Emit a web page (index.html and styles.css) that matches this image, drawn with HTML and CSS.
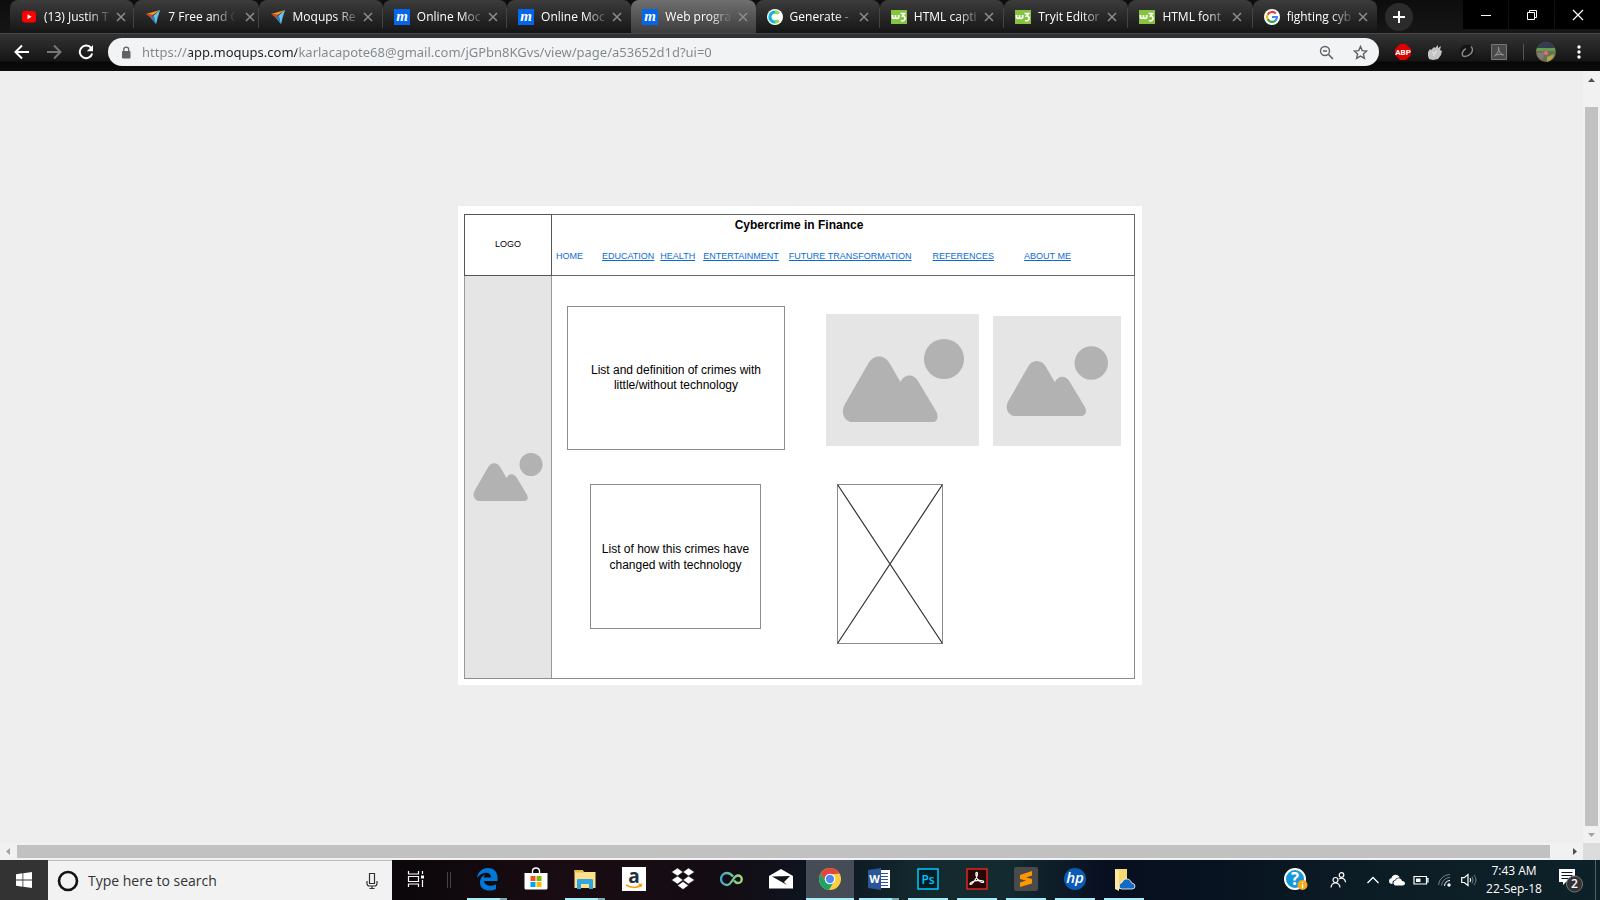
FILE: index.html
```html
<!DOCTYPE html>
<html lang="en">
<head>
<meta charset="utf-8">
<title>Web programming wireframe</title>
<link rel="stylesheet" href="styles.css">
</head>
<body>
<svg class="defs" aria-hidden="true">
  <symbol id="close" viewBox="0 0 10 10"><path d="M1 1l8 8M9 1l-8 8" stroke="#8d8d8d" stroke-width="1.500" fill="none"/></symbol>
  <symbol id="youtube" viewBox="0 0 16 16"><rect x="1" y="2" width="14" height="11.500" rx="3" fill="#f00"/><path d="M6.500 5.200v5l4.200-2.500z" fill="#fff"/></symbol>
  <symbol id="plane" viewBox="0 0 16 16"><path d="M1 5L15 1 8 6z" fill="#f7941d"/><path d="M1 5l7 1-2 3z" fill="#d9482b"/><path d="M15 1l-4 14-2-8z" fill="#3fa9dc"/><path d="M15 1L6 9l5 6 1-7z" fill="#6cc5ea"/><path d="M9 7l2 8-5-6z" fill="#2a7db0"/></symbol>
  <symbol id="generate" viewBox="0 0 16 16"><circle cx="8" cy="8" r="8" fill="#fff"/><path d="M11.500 4.500A5 5 0 1 0 11.500 11.500" fill="none" stroke="#12b5d8" stroke-width="3.200"/><path d="M8 3A5 5 0 0 1 11.500 4.500M11.500 11.500A5 5 0 0 1 8 13" fill="none" stroke="#a4d93a" stroke-width="3.200"/></symbol>
  <symbol id="w3" viewBox="0 0 16 16"><rect y="1" width="16" height="14" fill="#85c440"/><path d="M1.500 6v2.500q1.500 2 3 0V6M4.500 8.500q1.700 2 3.200 0V6M9.500 4.500h4L11.500 7q3 .2 2.500 3-1 2.500-4 1.500" fill="none" stroke="#fff" stroke-width="1.700"/></symbol>
  <symbol id="google" viewBox="0 0 16 16"><circle cx="8" cy="8" r="8" fill="#fff"/><g fill="none" stroke-width="2.200"><path d="M11.800 4.600A5 5 0 0 0 3.600 5.700" stroke="#ea4335"/><path d="M3.600 5.700a5 5 0 0 0 0 4.600" stroke="#fbbc05"/><path d="M3.600 10.300A5 5 0 0 0 11.400 11.600" stroke="#34a853"/><path d="M11.400 11.600A5 5 0 0 0 13 8H8" stroke="#4285f4"/></g></symbol>
  <symbol id="mountains" viewBox="0 0 96 83"><path d="M26 8C31-2 43-2 48 8L58.500 26C62 18 71 17 76 25L94 55C98 63 94 67 87 67H14C2 67-2 57 3 48Z" fill="#b2b2b2"/></symbol>
</svg>

<header class="browser">
  <div class="tabstrip">
    <nav class="tabs" aria-label="Tabs">
      <div class="tab"><svg class="fav"><use href="#youtube"/></svg><span class="tab-title">(13) Justin T</span><button class="tab-close" aria-label="Close tab"><svg><use href="#close"/></svg></button></div>
      <div class="tab"><svg class="fav"><use href="#plane"/></svg><span class="tab-title">7 Free and C</span><button class="tab-close" aria-label="Close tab"><svg><use href="#close"/></svg></button></div>
      <div class="tab"><svg class="fav"><use href="#plane"/></svg><span class="tab-title">Moqups Re</span><button class="tab-close" aria-label="Close tab"><svg><use href="#close"/></svg></button></div>
      <div class="tab"><svg class="fav" viewBox="0 0 16 16"><rect width="16" height="16" fill="#0566ea"/><text x="8" y="12" text-anchor="middle" class="moqups-m">m</text></svg><span class="tab-title">Online Moc</span><button class="tab-close" aria-label="Close tab"><svg><use href="#close"/></svg></button></div>
      <div class="tab before-active"><svg class="fav" viewBox="0 0 16 16"><rect width="16" height="16" fill="#0566ea"/><text x="8" y="12" text-anchor="middle" class="moqups-m">m</text></svg><span class="tab-title">Online Moc</span><button class="tab-close" aria-label="Close tab"><svg><use href="#close"/></svg></button></div>
      <div class="tab active"><svg class="fav" viewBox="0 0 16 16"><rect width="16" height="16" fill="#0566ea"/><text x="8" y="12" text-anchor="middle" class="moqups-m">m</text></svg><span class="tab-title">Web progra</span><button class="tab-close" aria-label="Close tab"><svg><use href="#close"/></svg></button></div>
      <div class="tab"><svg class="fav"><use href="#generate"/></svg><span class="tab-title">Generate -</span><button class="tab-close" aria-label="Close tab"><svg><use href="#close"/></svg></button></div>
      <div class="tab"><svg class="fav"><use href="#w3"/></svg><span class="tab-title">HTML capti</span><button class="tab-close" aria-label="Close tab"><svg><use href="#close"/></svg></button></div>
      <div class="tab"><svg class="fav"><use href="#w3"/></svg><span class="tab-title">Tryit Editor</span><button class="tab-close" aria-label="Close tab"><svg><use href="#close"/></svg></button></div>
      <div class="tab"><svg class="fav"><use href="#w3"/></svg><span class="tab-title">HTML font</span><button class="tab-close" aria-label="Close tab"><svg><use href="#close"/></svg></button></div>
      <div class="tab"><svg class="fav"><use href="#google"/></svg><span class="tab-title">fighting cyb</span><button class="tab-close" aria-label="Close tab"><svg><use href="#close"/></svg></button></div>
    </nav>
    <button class="new-tab" aria-label="New tab"><svg viewBox="0 0 12 12"><path d="M6 0v12M0 6h12" stroke="#fff" stroke-width="2"/></svg></button>
    <div class="window-controls">
      <button aria-label="Minimize"><svg viewBox="0 0 12 12"><path d="M1 6.500h10" stroke="#fff"/></svg></button>
      <button aria-label="Restore"><svg viewBox="0 0 12 12"><path d="M1.500 3.500h7v7h-7zM3.500 3.500v-2h7v7h-2" fill="none" stroke="#fff"/></svg></button>
      <button aria-label="Close"><svg viewBox="0 0 12 12"><path d="M1 1l10 10M11 1L1 11" stroke="#fff" stroke-width="1.200"/></svg></button>
    </div>
  </div>
  <div class="toolbar">
    <div class="nav-buttons">
      <button aria-label="Back"><svg viewBox="0 0 16 16"><path d="M15 8H2M8 1.500L1.500 8 8 14.500" fill="none" stroke="#fff" stroke-width="2"/></svg></button>
      <button aria-label="Forward"><svg viewBox="0 0 16 16"><path d="M1 8h13M8 1.500L14.500 8 8 14.500" fill="none" stroke="#777" stroke-width="2"/></svg></button>
      <button aria-label="Reload"><svg viewBox="0 0 16 16"><path d="M13.200 4.200A6.300 6.300 0 1 0 14.200 9.500" fill="none" stroke="#fff" stroke-width="2"/><path d="M15 1v6.200H8.800z" fill="#fff"/></svg></button>
    </div>
    <div class="omnibox">
      <svg class="lock" viewBox="0 0 10 13"><rect x="1" y="5" width="8.500" height="7.500" rx="1" fill="#5f6368"/><path d="M2.800 5V3.500a2.400 2.400 0 0 1 4.900 0V5" fill="none" stroke="#5f6368" stroke-width="1.300"/></svg>
      <input class="url" type="text" aria-label="Address" value="https://app.moqups.com/karlacapote68@gmail.com/jGPbn8KGvs/view/page/a53652d1d?ui=0">
      <button aria-label="Zoom"><svg viewBox="0 0 15 15"><circle cx="6" cy="6" r="4.500" fill="none" stroke="#5f6368" stroke-width="1.400"/><path d="M4 6h4M9.500 9.500l4.500 4.500" stroke="#5f6368" stroke-width="1.600"/></svg></button>
      <button aria-label="Bookmark"><svg viewBox="0 0 15 15"><path d="M7.500 1.500l1.800 4.100 4.500.4-3.400 3 1 4.400-3.900-2.300-3.900 2.300 1-4.400-3.400-3 4.500-.4z" fill="none" stroke="#5f6368" stroke-width="1.400"/></svg></button>
    </div>
    <div class="extensions">
      <button aria-label="Adblock Plus"><svg viewBox="0 0 16 16"><path d="M5 0h6l5 5v6l-5 5H5l-5-5V5z" fill="#d00"/><text x="8" y="11" text-anchor="middle" font-family="Roboto, sans-serif" font-size="8" font-weight="bold" fill="#fff">ABP</text></svg></button>
      <button aria-label="Extension"><svg viewBox="0 0 16 16"><path d="M1 8l2-3 1 1 3-3 1 1 3-3v3l3-2-1 4 2 1-1 4-3 4-5 1-4-1-1-3z" fill="#c4c4c4"/><path d="M5 8l3 2M6 12l4-5" stroke="#eee"/></svg></button>
      <button aria-label="Extension"><svg viewBox="0 0 16 16"><circle cx="8" cy="8" r="7.500" fill="#151515"/><path d="M12 2.500q3 3 0 7-4 4-8 2.500-2-2 1-6 1-1 2-1" fill="none" stroke="#888" stroke-width="1.500"/></svg></button>
      <button aria-label="Adobe Acrobat"><svg viewBox="0 0 16 16"><path d="M.5.500h15v15H.5z" fill="#4a4a4a" stroke="#777"/><path d="M7.500 3q1.500 4-4 9.500M7.500 3q-.5 6 5 8-4-1.500-8 0" fill="none" stroke="#999"/></svg></button>
      <span class="divider"></span>
      <button aria-label="Profile"><svg class="avatar" viewBox="0 0 20 20"><circle cx="10" cy="10" r="10" fill="#6d7057"/><path d="M1 6Q4 0 10 0t9 6z" fill="#333d4e"/><path d="M1 6h18v3H0z" fill="#649b4c"/><path d="M1 11l8-1-3 8q-5-3-5-7z" fill="#827a73"/><path d="M11 15l7-3q-1 6-7 8z" fill="#a9a947"/><circle cx="10" cy="11" r="2" fill="#e86a8b"/></svg></button>
      <button aria-label="Menu"><svg viewBox="0 0 16 16"><g fill="#fff"><circle cx="8" cy="3" r="1.700"/><circle cx="8" cy="8" r="1.700"/><circle cx="8" cy="13" r="1.700"/></g></svg></button>
    </div>
  </div>
</header>

<div class="viewport">
  <main class="stage">
    <div class="artboard">
      <div class="frame">
        <div class="logo">LOGO</div>
        <div class="masthead">
          <h1>Cybercrime in Finance</h1>
          <nav class="menu" aria-label="Site">
            <a class="plain" href="#">HOME</a><a href="#">EDUCATION</a><a href="#">HEALTH</a><a href="#">ENTERTAINMENT</a><a href="#">FUTURE TRANSFORMATION</a><a href="#">REFERENCES</a><a href="#">ABOUT ME</a>
          </nav>
        </div>
        <aside class="side-image"><svg viewBox="0 0 70 48" role="img" aria-label="Image placeholder"><use href="#mountains" x="0" y="10" width="55" height="47.500"/><circle cx="58" cy="11.500" r="11.500" fill="#b2b2b2"/></svg></aside>
        <section class="content">
          <div class="row first">
            <div class="box wide">List and definition of crimes with little/without technology</div>
            <div class="image large"><svg viewBox="0 0 122 83" role="img" aria-label="Image placeholder"><use href="#mountains" x="0" y="17" width="96" height="83"/><circle cx="102" cy="20" r="20" fill="#b2b2b2"/></svg></div>
            <div class="image small"><svg viewBox="0 0 122 83" role="img" aria-label="Image placeholder"><use href="#mountains" x="0" y="17" width="96" height="83"/><circle cx="102" cy="20" r="20" fill="#b2b2b2"/></svg></div>
          </div>
          <div class="row second">
            <div class="box narrow">List of how this crimes have changed with technology</div>
            <svg class="placeholder" viewBox="0 0 106 160" preserveAspectRatio="none" role="img" aria-label="Placeholder"><path d="M.5.500h105v159H.5z" fill="none" stroke="#8c8c8c"/><path d="M.5.500l105 159M105.500.500L.5 159.500" stroke="#333" stroke-width="1.200"/></svg>
          </div>
        </section>
      </div>
    </div>
  </main>
  <div class="scroll-y"><svg viewBox="0 0 17 17"><path d="M5 11l3.500-4 3.500 4z" fill="#505050"/></svg><span class="thumb-y"></span><svg viewBox="0 0 17 17"><path d="M5 7l3.500 4L12 7z" fill="#a3a3a3"/></svg></div>
  <div class="scroll-x"><svg viewBox="0 0 17 17"><path d="M10 5L6 8.500l4 3.500z" fill="#a3a3a3"/></svg><span class="thumb-x"></span><svg viewBox="0 0 17 17"><path d="M7 5l4 3.500L7 12z" fill="#505050"/></svg></div>
  <div class="corner"></div>
</div>

<footer class="taskbar">
  <button class="start" aria-label="Start"><svg viewBox="0 0 16 16"><path d="M0 2.200l6.500-.9v6.200H0zM7.300 1.200L16 0v7.500H7.300zM0 8.500h6.500v6.200L0 13.800zM7.300 8.500H16V16l-8.700-1.200z" fill="#fff"/></svg></button>
  <label class="search">
    <svg class="cortana" viewBox="0 0 22 22"><circle cx="11" cy="11" r="9" fill="none" stroke="#111" stroke-width="2.600"/></svg>
    <input type="text" placeholder="Type here to search" aria-label="Type here to search">
    <svg class="mic" viewBox="0 0 12 18"><path d="M3.500 1.500h5v10h-5zM1 9v2.500q0 2.500 2.500 2.500h5q2.500 0 2.500-2.500V9M6 14v3M3.500 16.500h5" fill="none" stroke="#333" stroke-width="1.200"/></svg>
  </label>
  <div class="apps">
    <button class="app task-view" aria-label="Task View"><svg viewBox="0 0 18 18"><path d="M1.500 1v3h10V1M1.500 17v-3h10v3M1.500 6.500h10v5h-10zM15.500 1v3M15.500 10v7" fill="none" stroke="#fff" stroke-width="1.200"/><path d="M14 5.500h3v3h-3z" fill="#fff"/></svg></button>
    <span class="grip"></span>
    <button class="app run stacked" aria-label="Edge"><svg viewBox="0 0 24 24"><path d="M2 11C3 4 8 1 13 1c6 0 9.500 4 9.500 9.500V14H9c.3 5 8 6 12 3.300V22c-6 3-16 2-16-6.500C5 11 8 8.500 10 7.500 9 9 8.700 10 8.800 10.500H16C16 4 7 4.500 2 11z" fill="#0078d7"/></svg></button>
    <button class="app" aria-label="Store"><svg viewBox="0 0 24 24"><path d="M8.500 7V3.500Q9 1 12 1t3.500 2.500V7" fill="none" stroke="#fff" stroke-width="1.300"/><path d="M.5 6h23v15q0 1.500-1.500 1.500H2Q.5 22.500.5 21z" fill="#fff"/><path d="M6.500 9h5v5h-5z" fill="#f25022"/><path d="M12.500 9h5v5h-5z" fill="#7fba00"/><path d="M6.500 15h5v5h-5z" fill="#00a4ef"/><path d="M12.500 15h5v5h-5z" fill="#ffb900"/></svg></button>
    <button class="app run stacked" aria-label="File Explorer"><svg viewBox="0 0 24 24"><path d="M1.500 3h8l1.500 2h11.500v16h-21z" fill="#ffe08a"/><path d="M1.500 3h8l1.500 2.500H1.500z" fill="#e9b84c"/><path d="M5 12h14q1 0 1 1v9h-4v-5H8v5H4v-9q0-1 1-1z" fill="#2fa5e3"/></svg></button>
    <button class="app" aria-label="Amazon"><svg viewBox="0 0 24 24"><path d="M0 0h24v24H0z" fill="#fff"/><text x="12" y="16" text-anchor="middle" font-family="Open Sans, sans-serif" font-size="19" font-weight="bold" fill="#222f3e">a</text><path d="M4 18q8 4.500 15 .5M16.500 17.500h3l-1 2.500" fill="none" stroke="#f90" stroke-width="1.500"/></svg></button>
    <button class="app" aria-label="Dropbox"><svg viewBox="0 0 24 24"><path d="M6.500 1L12 5 6.500 9 .5 5zM17.500 1l6 4-6 4L12 5zM6.500 9l5.500 4-5.500 4-6-4zM17.500 9l6 4-6 4L12 13zM12 14.500l5.500 4L12 22.500l-5.500-4z" fill="#fff" stroke="#0f0a12" stroke-width=".5"/></svg></button>
    <button class="app" aria-label="Infinity"><svg viewBox="0 0 24 24"><defs><linearGradient id="loop"><stop offset="0" stop-color="#42a8cb"/><stop offset="1" stop-color="#a6db70"/></linearGradient></defs><path d="M13 9.500C11 7 9 6 7 6a6 6 0 0 0 0 12c5 0 6-9.500 11-9.500a3.700 3.700 0 0 1 0 7.500c-2 0-3-1-4-2.500" fill="none" stroke="url(#loop)" stroke-width="2.300"/></svg></button>
    <button class="app" aria-label="Mail"><svg viewBox="0 0 24 24"><path d="M0 9L12 2l12 7v12.500H0z" fill="#fff"/><path d="M3 9.500l18-.5-6 6 3 3z" fill="#10141d"/></svg></button>
    <button class="app run current" aria-label="Chrome"><svg viewBox="0 0 24 24"><circle cx="12" cy="12" r="11" fill="#ffcd40"/><path d="M2.500 6.500A11 11 0 0 1 21.500 6.500L12 7.500 7.500 14z" fill="#e0483e"/><path d="M2.500 6.500A11 11 0 0 0 11 23L16 14.500 8 14.500z" fill="#1da462"/><circle cx="12" cy="12" r="5.300" fill="#fff"/><circle cx="12" cy="12" r="4.200" fill="#4c8bf5"/></svg></button>
    <button class="app run stacked" aria-label="Word"><svg viewBox="0 0 24 24"><path d="M12 3h11v18H12z" fill="#fff"/><path d="M14 6.500h7M14 9.500h7M14 12.500h7M14 15.500h7M14 18.500h7" stroke="#2b579a" stroke-width="1.200"/><path d="M1 3l13-2v22L1 21z" fill="#2b579a"/><text x="7.500" y="16" text-anchor="middle" font-family="Open Sans, sans-serif" font-size="11" font-weight="bold" fill="#fff">W</text></svg></button>
    <button class="app run" aria-label="Photoshop"><svg viewBox="0 0 24 24"><path d="M2 2h20v20H2z" fill="#001d26" stroke="#00c8ff" stroke-width="1.500"/><text x="12" y="16.500" text-anchor="middle" font-family="Open Sans, sans-serif" font-size="12" font-weight="600" fill="#00c8ff">Ps</text></svg></button>
    <button class="app run" aria-label="Acrobat"><svg viewBox="0 0 24 24"><path d="M2 2h20v20H2z" fill="#260504" stroke="#e1251b" stroke-width="1.500"/><path d="M11 5.500c2-1 2.200 3-1 7.500-2.500 4-5 5.500-5 3.800 0-1.800 6-3.800 11-3.300 4 .5 3 2.500.5 1.800-3.500-1-6.500-6-5.500-9.800" fill="none" stroke="#fff" stroke-width="1.200"/></svg></button>
    <button class="app run" aria-label="Sublime Text"><svg viewBox="0 0 24 24"><rect width="24" height="24" rx="2" fill="#4a4a4a"/><path d="M6 8l12-4v4.500L12 10.500l6 1.500v4.500L6 20v-4.500l6-2-6-1.500z" fill="#ff9800"/></svg></button>
    <button class="app run" aria-label="HP"><svg viewBox="0 0 24 24"><circle cx="12" cy="12" r="11" fill="#0a5bb5"/><text x="12" y="16" text-anchor="middle" font-family="Open Sans, sans-serif" font-size="15" font-style="italic" font-weight="600" fill="#fff">hp</text></svg></button>
    <button class="app run" aria-label="OneDrive folder"><svg viewBox="0 0 24 24"><path d="M3 2h12v20H3z" fill="#f8d775"/><path d="M3 2l4 2v20l-4-2z" fill="#ffe9a2"/><path d="M9 22a3.500 3.500 0 0 1 1-6.500q2-5 7-3 2 1 2.500 3.500 3.500.5 3.500 3 0 3-3 3z" fill="#0f6cc4" stroke="#fff" stroke-width=".8"/></svg></button>
  </div>
  <div class="tray">
    <button class="help" aria-label="Help"><svg viewBox="0 0 24 24"><circle cx="11" cy="11" r="10" fill="#1698dc" stroke="#fff" stroke-width="2"/><text x="11" y="17" text-anchor="middle" font-family="Open Sans, sans-serif" font-size="17" font-weight="bold" fill="#fff">?</text><circle cx="18.500" cy="17" r="5" fill="#f5a81c"/><path d="M18.500 14v1M18.500 16.200v4" stroke="#fff" stroke-width="1.300"/></svg></button>
    <button class="people" aria-label="People"><svg viewBox="0 0 16 16"><g fill="none" stroke="#fff" stroke-width="1.200"><circle cx="5.500" cy="8" r="2.500"/><path d="M1 15.500q.5-4.500 4.500-4.500t4.500 4.500"/><circle cx="11.500" cy="3" r="2.300"/><path d="M9 6.800q6-2 6.500 3.500"/></g></svg></button>
    <button aria-label="Show hidden icons"><svg viewBox="0 0 16 16"><path d="M2.500 11L8 5.500l5.500 5.500" fill="none" stroke="#fff" stroke-width="1.300"/></svg></button>
    <button aria-label="OneDrive"><svg viewBox="0 0 16 16"><path d="M0 9q0-2.500 2.500-3Q4 2 8 3q2 .5 2.700 2.500Q7 5 6 8q-3 .5-2.500 4Q0 12 0 9zM5 12.500a2.500 2.500 0 0 1 1.500-4Q8 5.500 11 6.500q1.500.5 2 2.500 3 .3 3 2.500 0 1.500-2 2H6z" fill="#fff"/></svg></button>
    <button aria-label="Battery"><svg viewBox="0 0 16 16"><path d="M1 4.500h12.500v7.500H1zM13.500 6.500H15v3.500h-1.500" fill="none" stroke="#fff" stroke-width="1.200"/><path d="M3 6.500h4.500V10H3z" fill="#fff"/></svg></button>
    <button aria-label="Network"><svg viewBox="0 0 16 16"><path d="M1.500 13A11.500 11.500 0 0 1 13 2.500M4.500 13.500a8.500 8.500 0 0 1 8.500-8" fill="none" stroke="#76828a"/><path d="M7.500 14A6 6 0 0 1 13 8.500" fill="none" stroke="#fff"/><circle cx="12" cy="13" r="1.700" fill="#fff"/></svg></button>
    <button aria-label="Volume"><svg viewBox="0 0 16 16"><path d="M.7 5.700h2.500L7 2.500v11L3.200 10.500H.7zM9 6q1.500 2 0 4" fill="none" stroke="#fff" stroke-width="1.200"/><path d="M11 4.500q2.500 3.500 0 7M13 3q4 5 0 10" fill="none" stroke="#76828a"/></svg></button>
    <time class="clock" datetime="2018-09-22T07:43">7:43 AM<br>22-Sep-18</time>
    <button class="notifications" aria-label="2 notifications"><svg viewBox="0 0 26 26"><path d="M1 2h16v13H8l-3 3v-3H1z" fill="#fff"/><path d="M3.500 5.500h11M3.500 8.500h11M3.500 11.500h7" stroke="#0b1a22"/><circle cx="16.500" cy="17" r="8" fill="#333" stroke="#777"/><text x="16.500" y="21" text-anchor="middle" font-family="Open Sans, sans-serif" font-size="12" font-weight="600" fill="#fff">2</text></svg></button>
    <span class="show-desktop"></span>
  </div>
</footer>
</body>
</html>
```
FILE: styles.css
```css
* { box-sizing: border-box; }
body {
  margin: 0;
  height: 100vh;
  display: flex;
  flex-direction: column;
  overflow: hidden;
  background: #eee;
  font-family: "Open Sans", "Noto Sans", sans-serif;
}
button {
  margin: 0;
  padding: 0;
  border: 0;
  background: none;
  display: flex;
  align-items: center;
  justify-content: center;
  flex: none;
}
input {
  border: 0;
  background: none;
  padding: 0;
  outline: 0;
  min-width: 0;
  font-family: inherit;
}
svg { display: block; flex: none; }
.defs { position: absolute; width: 0; height: 0; }

/* Browser chrome */
.browser { flex: none; background: #111; }
.tabstrip { display: flex; height: 33px; padding-left: 10px; background: linear-gradient(#0d0d0d, #161616); }
.tabs { display: flex; flex: 0 1 1367px; min-width: 0; }
.tab {
  flex: 1 1 0;
  min-width: 0;
  display: flex;
  align-items: center;
  padding: 1px 11px 0 11px;
  gap: 7px;
  border-radius: 8px 8px 0 0;
  background: linear-gradient(90deg, transparent calc(100% - 1px), #444 0) 0 8px / 100% 20px no-repeat, linear-gradient(#3c3c3c, #151515);
}
.tab.before-active, .tab:last-child { background: linear-gradient(#3c3c3c, #151515); }
.tab.active { background: linear-gradient(#707070, #3c3c3c); }
.fav { width: 16px; height: 16px; }
.moqups-m { font-family: "Liberation Serif", serif; font-size: 15px; font-style: italic; font-weight: bold; fill: #fff; }
.tab-title {
  flex: 1;
  white-space: nowrap;
  font-size: 12px;
  line-height: 20px;
  color: #fff;
  mask-image: linear-gradient(90deg, #000 44px, transparent 68px);
}
.tab-close { width: 10px; }
.tab-close svg { width: 10px; height: 10px; }
.new-tab { width: 28px; height: 28px; margin: 3px 0 0 8px; border-radius: 50%; background: #2b2b2b; }
.new-tab svg { width: 12px; height: 12px; }
.window-controls { display: flex; gap: 1px; margin-left: auto; height: 29px; }
.window-controls button { width: 45px; background: #000; }
.window-controls svg { width: 12px; height: 12px; }
.toolbar {
  display: flex;
  align-items: center;
  height: 38px;
  border-top: 1px solid #484848;
  padding: 0 13px 1px 14px;
  background: linear-gradient(#333, #151515 27px, #060606 28px, #0d0d0d);
}
.nav-buttons { display: flex; gap: 16px; width: 94px; }
.nav-buttons svg { width: 16px; height: 16px; }
.omnibox {
  flex: 1;
  display: flex;
  align-items: center;
  height: 28px;
  border-radius: 14px;
  background: #f1f3f4;
  padding: 0 10px 0 13px;
}
.lock { width: 10px; height: 13px; margin-right: 11px; }
.url {
  flex: 1;
  height: 24px;
  font-family: "Noto Sans", "Open Sans", sans-serif;
  font-size: 13px;
  color: transparent;
  background: linear-gradient(90deg, #80868b 47px, #202124 47px 155px, #80868b 155px);
  background-clip: text;
  -webkit-background-clip: text;
}
.omnibox button { width: 34px; height: 28px; }
.omnibox button:last-child { width: 18px; margin-left: 8px; }
.omnibox button svg { width: 15px; height: 15px; }
.extensions { display: flex; align-items: center; gap: 16px; padding-left: 16px; }
.extensions svg { width: 16px; height: 16px; }
.extensions .avatar { width: 20px; height: 20px; }
.extensions button:last-child { margin-left: -1px; }
.divider { width: 1px; height: 16px; margin-right: -4px; background: #555; }

/* Page viewport with scrollbars */
.viewport { flex: 1; min-height: 0; display: grid; grid-template-columns: 1fr 17px; grid-template-rows: 1fr 17px; }
.stage { padding: 135px 0 0 17px; min-height: 0; overflow: hidden; }
.scroll-y, .scroll-x { display: flex; background: #f1f1f1; }
.scroll-y { flex-direction: column; }
.scroll-y svg, .scroll-x svg { width: 17px; height: 17px; }
.thumb-y { flex: 1; margin: 19px 2px 0; background: #c1c1c1; }
.thumb-x { flex: 1; margin: 2px 16px 2px 0; background: #c1c1c1; }
.corner { background: #dcdcdc; }

/* Wireframe */
.artboard {
  width: 684px;
  max-width: 100%;
  margin: 0 auto;
  padding: 8px 7px 6px 6px;
  background: #fff;
  font-family: "Liberation Sans", Arial, sans-serif;
  color: #000;
}
.frame { display: grid; grid-template-columns: 88px 1fr; grid-template-rows: 62px 402px; border: 1px solid #8c8c8c; border-width: 0 1px 1px 0; }
.logo { display: flex; align-items: center; justify-content: center; padding-bottom: 2px; font-size: 9px; border: 1px solid #555; }
.masthead { border: 1px solid #666; border-left: 0; margin-right: -1px; }
.masthead h1 { margin: 2px 88px 0 0; text-align: center; font-size: 12px; line-height: 16px; }
.menu { display: flex; margin: 17px 0 0 4px; font-size: 9px; line-height: 12px; white-space: nowrap; }
.menu a { color: #0b6bdc; margin-right: 8px; text-underline-offset: 1px; }
.menu a:nth-child(1) { margin-right: 19px; text-decoration: none; }
.menu a:nth-child(2) { margin-right: 6px; }
.menu a:nth-child(4) { margin-right: 10px; }
.menu a:nth-child(5) { margin-right: 21px; }
.menu a:nth-child(6) { margin-right: 30px; }
.side-image { display: flex; align-items: center; justify-content: center; background: #e5e5e5; border: 1px solid #999; border-width: 0 1px 0 1px; }
.side-image svg { width: 70px; height: 48px; }
.content { padding: 30px 13px 0 15px; }
.row { display: flex; }
.box { display: flex; align-items: center; justify-content: center; text-align: center; border: 1px solid #8c8c8c; font-size: 12px; line-height: 16px; }
.wide { width: 218px; height: 144px; padding: 0 20px; margin-right: 41px; line-height: 15px; }
.image { display: flex; align-items: center; justify-content: center; background: #e5e5e5; }
.large { width: 153px; height: 132px; margin: 8px 14px 0 0; }
.small { width: 128px; height: 130px; margin-top: 10px; }
.large svg { width: 122px; height: 83px; }
.small svg { width: 102px; height: 70px; }
.second { padding: 34px 0 0 23px; }
.narrow { width: 171px; height: 145px; padding: 0 8px; margin-right: 76px; }
.placeholder { width: 106px; height: 160px; }

/* Taskbar */
.taskbar {
  flex: none;
  display: flex;
  height: 40px;
  background: linear-gradient(90deg, #0b070b 25%, #190c12 35%, #140c13 45%, #0c1420 51%, #142a2f 58%, #132a30 63%, #080f20 69%, #071320 76%, #0c1c25 85%, #0d2128);
}
.start { width: 48px; background: #333; }
.start svg { width: 16px; height: 16px; }
.search { display: flex; align-items: center; flex: 0 1 344px; min-width: 0; background: #f2f2f2; border-top: 1px solid #bbb; padding: 0 14px 0 9px; }
.cortana { width: 22px; height: 22px; }
.search input { flex: 1; margin-left: 9px; font-size: 14px; height: 28px; }
.search input::placeholder { color: #333; opacity: 1; }
.mic { width: 12px; height: 18px; }
.apps { display: flex; gap: 9px; }
.app { width: 40px; border-bottom: 2px solid transparent; }
.app svg { width: 24px; height: 24px; }
.task-view { width: 48px; margin-right: -2px; }
.task-view svg { width: 18px; height: 18px; }
.grip { width: 4px; height: 16px; align-self: center; border: 1px solid #444; border-width: 0 1px; }
.grip + .app { margin-left: 7px; }
.app.run { border-bottom-color: #a6eefb; }
.app.stacked { border-image: linear-gradient(90deg, #a6eefb 80%, #7faab3 80%) 1; border-width: 0 0 2px; }
.app.current { width: 48px; margin: 0 -4px; background: #454c56; }
.tray { display: flex; margin-left: auto; align-items: stretch; }
.tray button { width: 24px; }
.tray svg { width: 16px; height: 16px; }
.tray .help { width: 38px; }
.tray .help svg { width: 24px; height: 24px; }
.tray .people { width: 46px; }
.clock { width: 66px; padding-top: 2px; text-align: center; color: #fff; font-size: 12px; line-height: 18px; white-space: nowrap; }
.tray .notifications { width: 48px; }
.tray .notifications svg { width: 26px; height: 26px; }
.show-desktop { width: 5px; border-left: 1px solid #52616a; }
```
